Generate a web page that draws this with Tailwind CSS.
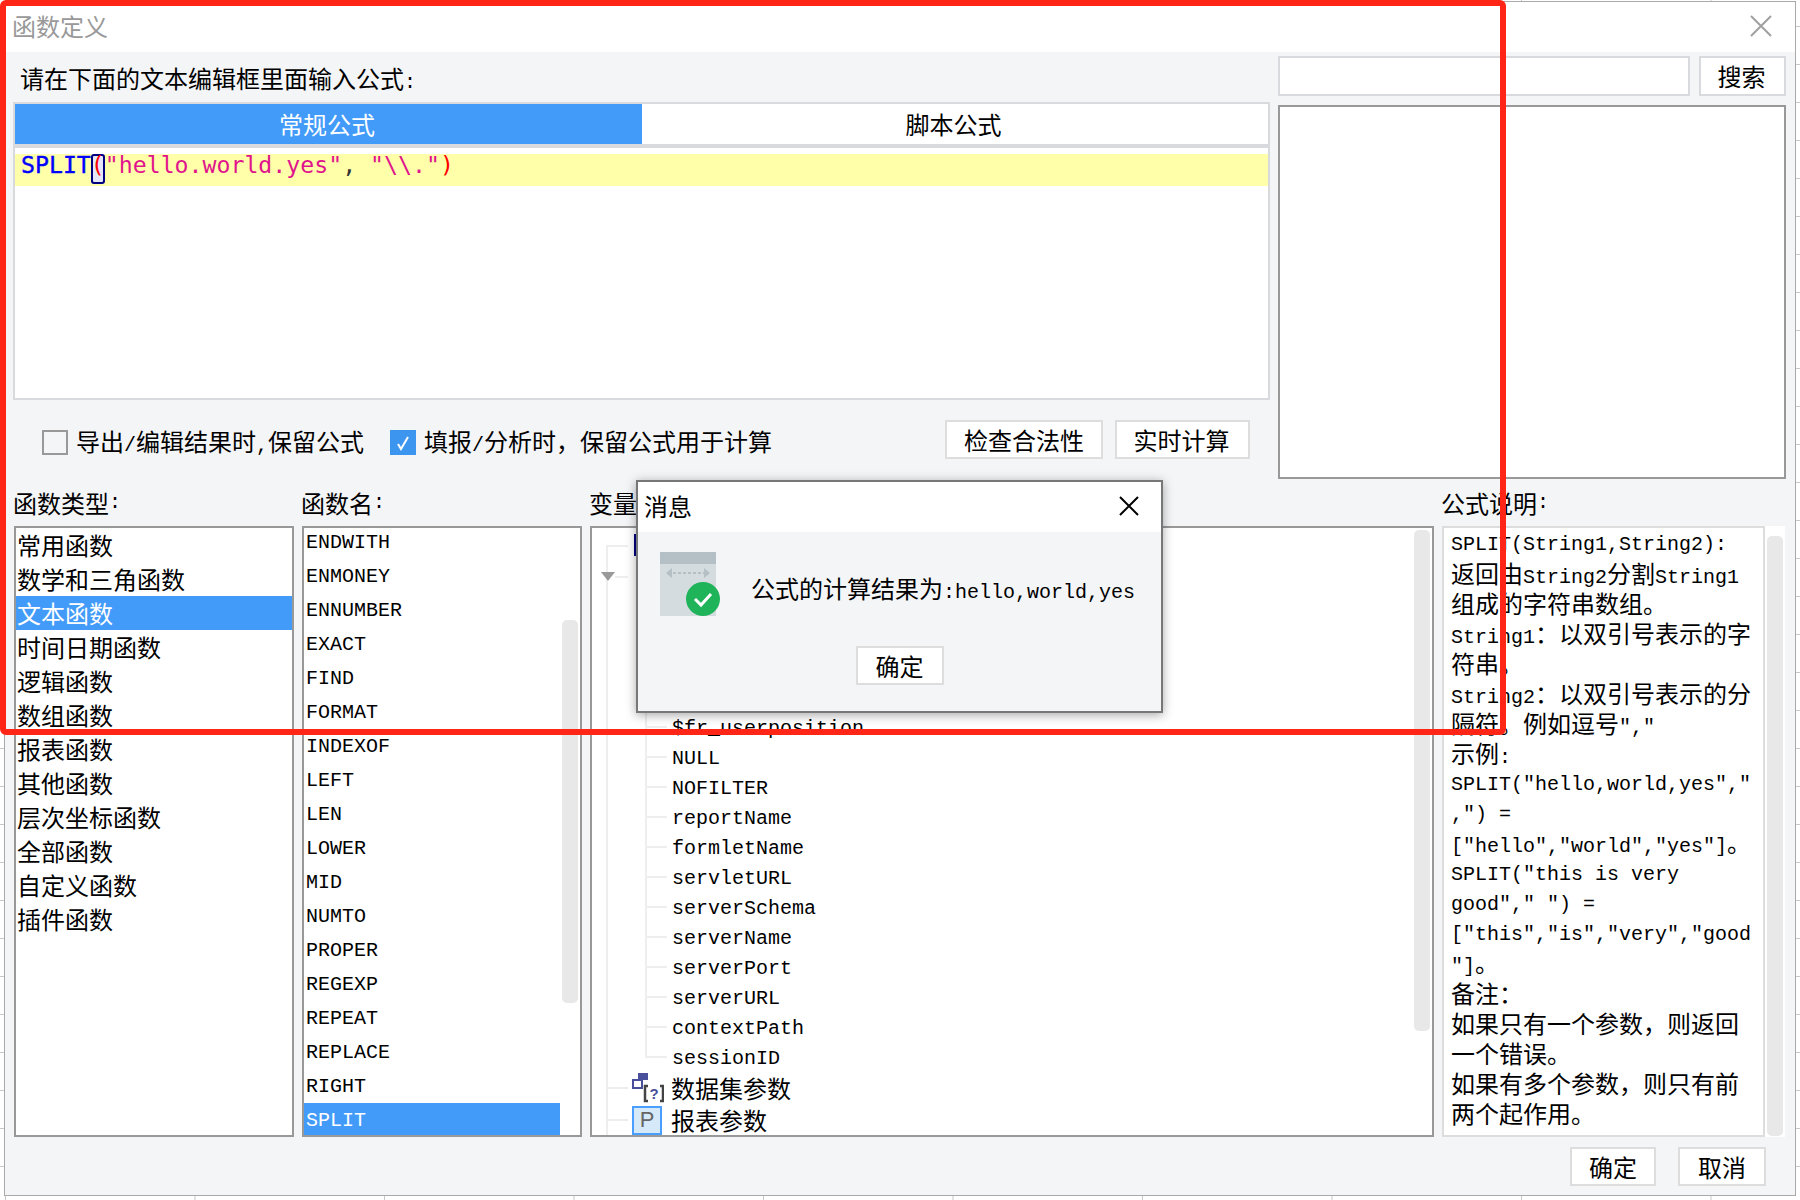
<!DOCTYPE html>
<html lang="zh-CN">
<head>
    <meta charset="UTF-8">
    <title>函数定义</title>
    <script src="https://cdn.jsdelivr.net/npm/@tailwindcss/browser@4"></script>
</head>
<body class="relative w-[1800px] h-[1200px] overflow-hidden bg-white bg-[linear-gradient(#c8c8c8_1px,transparent_1px),linear-gradient(90deg,#c8c8c8_1px,transparent_1px)] bg-[size:189.5px_38px] bg-[position:5px_26px] font-['Noto_Sans_CJK_SC',sans-serif] text-[24px] text-black">

    <!-- Main window -->
    <div class="ml-[4px] mt-[1px] w-[1792px] h-[1195px] flex flex-col border border-[#aaaaaa] bg-[#f4f5f7]">
        <!-- Title bar -->
        <div class="h-[50px] shrink-0 bg-white flex items-center justify-between pl-[7px] pr-[23px] pb-[2px] text-[#999999]">
            <span class="leading-[24px]">函数定义</span>
            <svg class="w-[22px] h-[22px]" viewBox="0 0 22 22" fill="none" stroke="#a0a0a0" stroke-width="2"><path d="M1 1l20 20M21 1L1 21"/></svg>
        </div>

        <!-- Editor + search -->
        <div class="h-[426px] shrink-0 flex pl-[8px]">
            <div class="w-[1257px]">
                <div class="h-[50px] pl-[7px] pt-[14px] leading-[24px]">请在下面的文本编辑框里面输入公式<span class="font-['Liberation_Mono',monospace] text-[20px]">:</span></div>
                <div class="h-[298px] border-2 border-[#d9dadd] bg-white">
                    <div class="h-[40px] flex leading-[40px] text-center">
                        <div class="w-[627px] bg-[#439bf9] text-white pr-[3px]">常规公式</div>
                        <div class="flex-1 bg-white pr-[3px]">脚本公式</div>
                    </div>
                    <div class="h-[4px] bg-[#d9dadd]"></div>
                    <div class="mt-[6px] h-[32px] bg-[#ffffaa] pl-[6px] leading-[22px] whitespace-pre font-['DejaVu_Sans_Mono',monospace] text-[23.2px] text-[#e0148c]"><span class="text-[#0000ff] [-webkit-text-stroke:0.4px_#0000ff]">SPLIT</span><span class="inline-block align-top w-[14px] h-[30px] rounded-[3px] bg-[#e6e6fa] shadow-[inset_0_0_0_2px_#000080] text-[#ff0000]">(</span>"hello.world.yes"<span class="text-[#333333]">,</span> "\\."<span class="text-[#ff0000]">)</span></div>
                </div>
                <div class="mt-[20px] h-[39px] flex items-center pl-[29px] pr-[20px]">
                    <span class="mt-[6px] w-[26px] h-[25px] border-2 border-[#999999] bg-[#f4f5f7]"></span>
                    <span class="mt-[8px] ml-[8px] leading-[24px]">导出<span class="font-['Liberation_Mono',monospace] text-[20px]">/</span>编辑结果时<span class="font-['Liberation_Mono',monospace] text-[20px]">,</span>保留公式</span>
                    <span class="mt-[6px] ml-[26px] w-[26px] h-[25px] bg-[#3c96f0] flex items-center justify-center">
                        <svg class="w-[18px] h-[18px]" viewBox="0 0 18 18" fill="none" stroke="#ffffff" stroke-width="2"><path d="M4 10l3 5 7-12"/></svg>
                    </span>
                    <span class="mt-[8px] ml-[8px] leading-[24px]">填报<span class="font-['Liberation_Mono',monospace] text-[20px]">/</span>分析时&#xFF0C;保留公式用于计算</span>
                    <button class="ml-auto w-[158px] h-[39px] border-2 border-[#dddddd] bg-white leading-[33px]">检查合法性</button>
                    <button class="ml-[12px] w-[135px] h-[39px] border-2 border-[#dddddd] bg-white leading-[33px] pr-[2px]">实时计算</button>
                </div>
            </div>
            <div class="ml-[8px] w-[508px] pt-[4px]">
                <div class="flex gap-[9px] h-[40px]">
                    <div class="w-[412px] border-2 border-[#d9dadd] bg-white"></div>
                    <button class="w-[87px] border-2 border-[#d9dadd] bg-white leading-[36px] pr-[2px]">搜索</button>
                </div>
                <div class="mt-[9px] h-[374px] border-2 border-[#999999] bg-white"></div>
            </div>
        </div>

        <!-- Function pickers -->
        <div class="h-[659px] shrink-0 flex gap-[8px] pl-[9px]">
            <!-- Function types -->
            <div class="w-[280px]">
                <div class="h-[48px] -ml-[1px] pt-[2px] flex items-center">函数类型<span class="font-['Liberation_Mono',monospace] text-[20px]">:</span></div>
                <div class="h-[611px] border-2 border-[#999999] bg-white overflow-hidden">
                    <div class="leading-[34px]">
                        <div class="h-[34px] pl-[1px]">常用函数</div>
                        <div class="h-[34px] pl-[1px]">数学和三角函数</div>
                        <div class="h-[34px] pl-[1px] bg-[#439bf9] text-white">文本函数</div>
                        <div class="h-[34px] pl-[1px]">时间日期函数</div>
                        <div class="h-[34px] pl-[1px]">逻辑函数</div>
                        <div class="h-[34px] pl-[1px]">数组函数</div>
                        <div class="h-[34px] pl-[1px]">报表函数</div>
                        <div class="h-[34px] pl-[1px]">其他函数</div>
                        <div class="h-[34px] pl-[1px]">层次坐标函数</div>
                        <div class="h-[34px] pl-[1px]">全部函数</div>
                        <div class="h-[34px] pl-[1px]">自定义函数</div>
                        <div class="h-[34px] pl-[1px]">插件函数</div>
                    </div>
                </div>
            </div>

            <!-- Function names -->
            <div class="w-[280px]">
                <div class="h-[48px] -ml-[1px] pt-[2px] flex items-center">函数名<span class="font-['Liberation_Mono',monospace] text-[20px]">:</span></div>
                <div class="h-[611px] border-2 border-[#999999] bg-white overflow-hidden flex">
                    <div class="w-[256px] -mt-[3px] leading-[36px] font-['Liberation_Mono',monospace] text-[20px]">
                        <div class="h-[34px] pl-[2px]">ENDWITH</div>
                        <div class="h-[34px] pl-[2px]">ENMONEY</div>
                        <div class="h-[34px] pl-[2px]">ENNUMBER</div>
                        <div class="h-[34px] pl-[2px]">EXACT</div>
                        <div class="h-[34px] pl-[2px]">FIND</div>
                        <div class="h-[34px] pl-[2px]">FORMAT</div>
                        <div class="h-[34px] pl-[2px]">INDEXOF</div>
                        <div class="h-[34px] pl-[2px]">LEFT</div>
                        <div class="h-[34px] pl-[2px]">LEN</div>
                        <div class="h-[34px] pl-[2px]">LOWER</div>
                        <div class="h-[34px] pl-[2px]">MID</div>
                        <div class="h-[34px] pl-[2px]">NUMTO</div>
                        <div class="h-[34px] pl-[2px]">PROPER</div>
                        <div class="h-[34px] pl-[2px]">REGEXP</div>
                        <div class="h-[34px] pl-[2px]">REPEAT</div>
                        <div class="h-[34px] pl-[2px]">REPLACE</div>
                        <div class="h-[34px] pl-[2px]">RIGHT</div>
                        <div class="h-[34px] pl-[2px] bg-[#439bf9] text-white">SPLIT</div>
                    </div>
                    <div class="ml-[2px] mt-[92px] w-[16px] h-[383px] rounded-[5px] bg-[#e8e8e8]"></div>
                </div>
            </div>

            <!-- Variables tree -->
            <div class="w-[844px]">
                <div class="h-[48px] -ml-[1px] pt-[2px] flex items-center">变量</div>
                <div class="h-[611px] border-2 border-[#999999] bg-white overflow-hidden flex">
                    <div class="flex-1 pt-[2px] pl-[14px]">
                        <div class="h-[30px] flex items-center">
                            <span class="self-end w-[22px] h-[15px] border-l-2 border-t-2 border-[#eeeeee]"></span>
                            <span class="ml-[6px] w-[22px] h-[22px] border-2 border-[#000080]"></span>
                        </div>
                        <div class="h-[580px] border-l-2 border-[#eeeeee] pt-[1px]">
                            <div class="h-[31px] flex items-center">
                                <svg class="-ml-[7px] w-[14px] h-[9px] shrink-0" viewBox="0 0 14 9"><path d="M0 0h14L7 9z" fill="#999999"/></svg>
                                <span class="w-[13px] h-[2px] bg-[#eeeeee]"></span>
                            </div>
                            <div class="ml-[37px] font-['Liberation_Mono',monospace] text-[20px] leading-[30px]">
                                <div class="border-l-2 border-[#eeeeee]">
                                    <div class="h-[120px]"></div>
                                    <div class="h-[30px] flex items-center"><span class="w-[20px] h-[2px] bg-[#eeeeee]"></span><span class="ml-[5px] mt-[4px]">$fr_userposition</span></div>
                                    <div class="h-[30px] flex items-center"><span class="w-[20px] h-[2px] bg-[#eeeeee]"></span><span class="ml-[5px] mt-[4px]">NULL</span></div>
                                    <div class="h-[30px] flex items-center"><span class="w-[20px] h-[2px] bg-[#eeeeee]"></span><span class="ml-[5px] mt-[4px]">NOFILTER</span></div>
                                    <div class="h-[30px] flex items-center"><span class="w-[20px] h-[2px] bg-[#eeeeee]"></span><span class="ml-[5px] mt-[4px]">reportName</span></div>
                                    <div class="h-[30px] flex items-center"><span class="w-[20px] h-[2px] bg-[#eeeeee]"></span><span class="ml-[5px] mt-[4px]">formletName</span></div>
                                    <div class="h-[30px] flex items-center"><span class="w-[20px] h-[2px] bg-[#eeeeee]"></span><span class="ml-[5px] mt-[4px]">servletURL</span></div>
                                    <div class="h-[30px] flex items-center"><span class="w-[20px] h-[2px] bg-[#eeeeee]"></span><span class="ml-[5px] mt-[4px]">serverSchema</span></div>
                                    <div class="h-[30px] flex items-center"><span class="w-[20px] h-[2px] bg-[#eeeeee]"></span><span class="ml-[5px] mt-[4px]">serverName</span></div>
                                    <div class="h-[30px] flex items-center"><span class="w-[20px] h-[2px] bg-[#eeeeee]"></span><span class="ml-[5px] mt-[4px]">serverPort</span></div>
                                    <div class="h-[30px] flex items-center"><span class="w-[20px] h-[2px] bg-[#eeeeee]"></span><span class="ml-[5px] mt-[4px]">serverURL</span></div>
                                    <div class="h-[30px] flex items-center"><span class="w-[20px] h-[2px] bg-[#eeeeee]"></span><span class="ml-[5px] mt-[4px]">contextPath</span></div>
                                </div>
                                <div class="h-[30px] flex items-center">
                                    <span class="self-start w-[22px] h-[16px] border-l-2 border-b-2 border-[#eeeeee]"></span>
                                    <span class="ml-[5px] mt-[4px]">sessionID</span>
                                </div>
                            </div>
                            <div class="h-[32px] flex items-center">
                                <span class="w-[20px] h-[2px] bg-[#eeeeee]"></span>
                                <svg class="ml-[4px] w-[32px] h-[30px] shrink-0" viewBox="0 0 32 30" fill="none">
                                    <rect x="1" y="7" width="9" height="8" stroke="#4a4f9c" stroke-width="2"/>
                                    <rect x="6" y="0" width="10" height="7" fill="#4a4f9c"/>
                                    <path d="M16 13h-3v15h3M28 13h3v15h-3" stroke="#444444" stroke-width="2.5"/>
                                    <text x="22" y="26" text-anchor="middle" font-family="Liberation Sans" font-size="15" font-weight="700" fill="#4a4f9c">?</text>
                                </svg>
                                <span class="ml-[7px] font-['Noto_Sans_CJK_SC',sans-serif] text-[24px]">数据集参数</span>
                            </div>
                            <div class="h-[32px] flex items-center">
                                <span class="w-[20px] h-[2px] bg-[#eeeeee]"></span>
                                <span class="ml-[4px] w-[30px] h-[29px] shrink-0 border-2 border-[#4a9eff] bg-[#d5e9f9] flex items-center justify-center font-['Liberation_Sans',sans-serif] text-[22px] leading-none text-[#666666]">P</span>
                                <span class="ml-[9px] font-['Noto_Sans_CJK_SC',sans-serif] text-[24px]">报表参数</span>
                            </div>
                        </div>
                    </div>
                    <div class="mt-[2px] mr-[2px] w-[16px] h-[501px] rounded-[5px] bg-[#e8e8e8]"></div>
                </div>
            </div>

            <!-- Formula description -->
            <div class="w-[343px]">
                <div class="h-[48px] -ml-[1px] pt-[2px] flex items-center">公式说明<span class="font-['Liberation_Mono',monospace] text-[20px]">:</span></div>
                <div class="h-[611px] flex">
                    <div class="w-[323px] border-2 border-[#dddddd] bg-white pl-[7px] pt-[2px] leading-[30px] overflow-hidden">
                        <div class="h-[30px] whitespace-pre font-['Liberation_Mono',monospace] text-[20px]">SPLIT(String1,String2):</div>
                        <div class="h-[30px] leading-[25px] whitespace-pre">返回由<span class="font-['Liberation_Mono',monospace] text-[20px]">String2</span>分割<span class="font-['Liberation_Mono',monospace] text-[20px]">String1</span></div>
                        <div class="h-[30px] leading-[25px] whitespace-pre">组成的字符串数组。</div>
                        <div class="h-[30px] leading-[25px] whitespace-pre"><span class="font-['Liberation_Mono',monospace] text-[20px]">String1</span>&#xFF1A;以双引号表示的字</div>
                        <div class="h-[30px] leading-[25px] whitespace-pre">符串。</div>
                        <div class="h-[30px] leading-[25px] whitespace-pre"><span class="font-['Liberation_Mono',monospace] text-[20px]">String2</span>&#xFF1A;以双引号表示的分</div>
                        <div class="h-[30px] leading-[25px] whitespace-pre">隔符。例如逗号<span class="font-['Liberation_Mono',monospace] text-[20px]">","</span></div>
                        <div class="h-[30px] leading-[25px] whitespace-pre">示例<span class="font-['Liberation_Mono',monospace] text-[20px]">:</span></div>
                        <div class="h-[30px] whitespace-pre font-['Liberation_Mono',monospace] text-[20px]">SPLIT("hello,world,yes","</div>
                        <div class="h-[30px] whitespace-pre font-['Liberation_Mono',monospace] text-[20px]">,") =</div>
                        <div class="h-[30px] leading-[23px] whitespace-pre"><span class="font-['Liberation_Mono',monospace] text-[20px]">["hello","world","yes"]</span>。</div>
                        <div class="h-[30px] whitespace-pre font-['Liberation_Mono',monospace] text-[20px]">SPLIT("this is very</div>
                        <div class="h-[30px] whitespace-pre font-['Liberation_Mono',monospace] text-[20px]">good"," ") =</div>
                        <div class="h-[30px] whitespace-pre font-['Liberation_Mono',monospace] text-[20px]">["this","is","very","good</div>
                        <div class="h-[30px] leading-[23px] whitespace-pre"><span class="font-['Liberation_Mono',monospace] text-[20px]">"]</span>。</div>
                        <div class="h-[30px] leading-[25px] whitespace-pre">备注&#xFF1A;</div>
                        <div class="h-[30px] leading-[25px] whitespace-pre">如果只有一个参数&#xFF0C;则返回</div>
                        <div class="h-[30px] leading-[25px] whitespace-pre">一个错误。</div>
                        <div class="h-[30px] leading-[25px] whitespace-pre">如果有多个参数&#xFF0C;则只有前</div>
                        <div class="h-[30px] leading-[25px] whitespace-pre">两个起作用。</div>
                    </div>
                    <div class="w-[20px] bg-white pl-[2px] pt-[10px]">
                        <div class="w-[16px] h-[600px] rounded-[5px] bg-[#e8e8e8]"></div>
                    </div>
                </div>
            </div>
        </div>

        <!-- Footer buttons -->
        <div class="mt-[10px] flex justify-end gap-[22px] pr-[29px]">
            <button class="w-[86px] h-[39px] border-2 border-[#dddddd] bg-white leading-[35px]">确定</button>
            <button class="w-[88px] h-[39px] border-2 border-[#dddddd] bg-white leading-[35px]">取消</button>
        </div>
    </div>

    <!-- Message dialog -->
    <div class="absolute left-[636px] top-[480px] z-10 w-[527px] h-[233px] border-2 border-[#777777] bg-[#f4f5f7] shadow-[0_2px_10px_rgba(0,0,0,0.35)]">
        <div class="h-[50px] bg-white flex items-center justify-between pl-[6px] pr-[22px] pb-[2px]">
            <span class="leading-[24px]">消息</span>
            <svg class="w-[20px] h-[20px]" viewBox="0 0 20 20" fill="none" stroke="#000000" stroke-width="2"><path d="M1 1l18 18M19 1L1 19"/></svg>
        </div>
        <div class="flex pl-[22px] pt-[20px]">
            <svg class="w-[60px] h-[64px] shrink-0" viewBox="0 0 60 64">
                <rect x="0" y="0" width="56" height="64" fill="#d5dce0"/>
                <rect x="0" y="0" width="56" height="12" fill="#b5bfc6"/>
                <path d="M8 21h40" stroke="#b5bfc6" stroke-width="2" stroke-dasharray="3 2"/>
                <path d="M6 21l6-5v10zM50 21l-6-5v10z" fill="#b5bfc6"/>
                <circle cx="43" cy="47" r="17" fill="#1fb35a"/>
                <path d="M35 47l6 6 10-11" fill="none" stroke="#ffffff" stroke-width="3"/>
            </svg>
            <div class="ml-[31px] mt-[24px] leading-[24px] whitespace-pre">公式的计算结果为<span class="font-['Liberation_Mono',monospace] text-[20px]">:hello,world,yes</span></div>
        </div>
        <button class="block mx-auto mt-[30px] w-[88px] h-[39px] border-2 border-[#dddddd] bg-white leading-[33px]">确定</button>
    </div>

    <!-- Red annotation frame -->
    <div class="absolute left-0 top-0 z-20 w-[1506px] h-[735px] border-[6px] border-[#ff2618] rounded-[6px] pointer-events-none"></div>
</body>
</html>
